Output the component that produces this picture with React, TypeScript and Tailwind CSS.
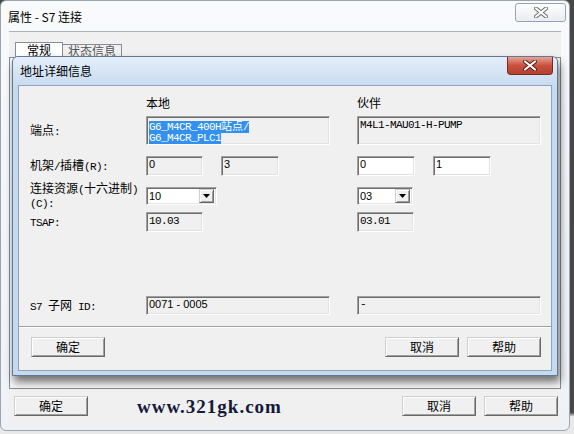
import React from "react";

// ASCII runs in a narrow mono face (SimSun-like), CJK stays 12px
function Mixed({ text }: { text: string }) {
  const parts = text.split(/([\x20-\x7e]+)/).filter((p) => p !== "");
  return (
    <>
      {parts.map((p, i) =>
        /^[\x20-\x7e]+$/.test(p) ? (
          <span key={i} className="font-['Liberation_Mono',monospace] text-[11px] tracking-[-0.6px] whitespace-pre">
            {p}
          </span>
        ) : (
          <span key={i}>{p}</span>
        )
      )}
    </>
  );
}

const sunken =
  "border border-[#a0a0a0] border-r-white border-b-white shadow-[inset_1px_1px_0_#6e6e6e,inset_-1px_-1px_0_#e3e3e3]";
const raised =
  "border border-[#cfcfcf] border-r-[#696969] border-b-[#696969] shadow-[inset_1px_1px_0_#ffffff,inset_-1px_-1px_0_#a0a0a0] bg-[#f0f0f0]";

function Btn({ label, className }: { label: string; className: string }) {
  return (
    <div className={`${raised} ${className} flex items-center justify-center text-[12px] leading-none text-black`}>
      {label}
    </div>
  );
}

function CloseX({ red }: { red?: boolean }) {
  return (
    <svg width="14" height="11" viewBox="0 0 14 11">
      <path d="M2 1.5 L12 9.5 M12 1.5 L2 9.5" stroke={red ? "#5a1a12" : "#6b6b6b"} strokeWidth="4" strokeLinecap="round" />
      <path d="M2 1.5 L12 9.5 M12 1.5 L2 9.5" stroke="#ffffff" strokeWidth="2.2" strokeLinecap="round" />
    </svg>
  );
}

function Combo({ value, className }: { value: string; className: string }) {
  return (
    <div className={`${sunken} ${className} flex h-[18px] items-center justify-between bg-white pl-[2px] pr-[2px]`}>
      <span className="font-['Liberation_Sans',sans-serif] text-[11px] leading-none">{value}</span>
      <div className={`${raised} flex h-[14px] w-[15px] items-center justify-center`}>
        <svg width="7" height="4" viewBox="0 0 7 4">
          <path d="M0 0 H7 L3.5 4 Z" fill="#000" />
        </svg>
      </div>
    </div>
  );
}

export default function App() {
  return (
    <div className="relative h-[434px] w-[574px] overflow-hidden bg-gradient-to-b from-[#474747] from-[95%] to-[#e9e9e9] to-[96%] font-['Noto_Sans_CJK_SC',sans-serif] text-[12px] text-black">
      {/* outer window: 属性 - S7 连接 */}
      <div className="flex h-[431px] w-[570px] flex-col rounded-[6px] border border-[#9aa5b1] bg-gradient-to-b from-[#f8fafc] to-[#eef2f6]">
        <div className="flex h-[30px] shrink-0 items-start justify-between pl-[7px] pr-[3px]">
          <span className="mt-[8px] text-[12px] leading-[16px]">属性 - S7 连接</span>
          <div className="mt-[2px] flex h-[19px] w-[51px] items-center justify-center rounded-[3px] border border-[#9aa3ad] bg-gradient-to-b from-[#fdfdfd] to-[#e9edf1]">
            <CloseX />
          </div>
        </div>

        <div className="mx-[8px] flex flex-1 flex-col border-t border-[#aab2bc] bg-[#f0f0f0]">
          <div className="mt-[10px] flex h-[15px] items-end pl-[6px]">
            <div className="flex h-[15px] w-[48px] items-center justify-center border border-b-0 border-[#898c95] bg-white text-[12px]">
              常规
            </div>
            <div className="flex h-[13px] w-[59px] items-center justify-center border border-b-0 border-l-0 border-[#898c95] text-[12px] text-[#555]">
              状态信息
            </div>
          </div>
          <div className="h-[332px] border border-[#898c95] bg-[#f7f7f7]" />
          <div className="mt-[7px] flex items-center pl-[5px] pr-[3px]">
            <Btn label="确定" className="h-[20px] w-[74px]" />
            <span className="ml-[49px] font-['Liberation_Serif',serif] text-[19px] font-bold leading-none tracking-[1px] text-[#15183a]">
              www.321gk.com
            </span>
            <div className="ml-auto flex gap-[8px]">
              <Btn label="取消" className="h-[20px] w-[74px]" />
              <Btn label="帮助" className="h-[20px] w-[74px]" />
            </div>
          </div>
        </div>
        <div className="h-[3px]" />
      </div>

      {/* modal: 地址详细信息 */}
      <div className="absolute left-[12px] top-[56px] flex h-[320px] w-[546px] flex-col rounded-t-[6px] border border-[#5f7893] bg-[#c6daef] shadow-[2px_6px_9px_rgba(0,0,0,0.55)]">
        <div className="relative flex h-[28px] shrink-0 items-center rounded-t-[5px] bg-gradient-to-b from-[#e4eef9] to-[#c9dcf0] pl-[7px]">
          <span className="text-[12px] leading-none">地址详细信息</span>
          <div className="absolute right-[4px] top-0 flex h-[18px] w-[46px] items-center justify-center rounded-b-[4px] border border-t-0 border-[#7c2a20] bg-gradient-to-b from-[#e7a395] via-[#c8503e] to-[#b6402f]">
            <CloseX red />
          </div>
        </div>

        <div className="mx-[5px] flex h-[286px] flex-col border border-[#8fa3ba] bg-[#f0f0f0]">
          {/* header */}
          <div className="mt-[9px] flex h-[16px] items-center">
            <div className="w-[127px]" />
            <div className="w-[184px] text-[12px] leading-none">本地</div>
            <div className="ml-[27px] w-[184px] text-[12px] leading-none">伙伴</div>
          </div>

          {/* endpoint */}
          <div className="mt-[5px] flex h-[29px] items-center">
            <div className="w-[127px] pl-[11px]">
              <Mixed text="端点:" />
            </div>
            <div className={`${sunken} h-[29px] w-[184px] pl-[2px] pt-[3px] font-['Liberation_Mono',monospace] text-[11px] leading-[11px] tracking-[-0.6px] text-white`}>
              <div>
                <span className="bg-[#3390f0]">
                  G6_M4CR_400H<span className="font-['Noto_Sans_CJK_SC',sans-serif] text-[11px] tracking-normal">站点</span>/
                </span>
              </div>
              <div>
                <span className="bg-[#3390f0]">G6_M4CR_PLC1</span>
              </div>
            </div>
            <div className={`${sunken} ml-[27px] h-[29px] w-[184px] pl-[2px] pt-[3px] font-['Liberation_Mono',monospace] text-[11px] leading-[11px] tracking-[-0.6px]`}>
              M4L1-MAU01-H-PUMP
            </div>
          </div>

          {/* rack / slot */}
          <div className="mt-[11px] flex h-[20px] items-center">
            <div className="w-[127px] pl-[11px]">
              <Mixed text="机架/插槽(R):" />
            </div>
            <div className="flex w-[184px] gap-[18px]">
              <div className={`${sunken} h-[20px] w-[57px] pl-[2px] font-['Liberation_Sans',sans-serif] text-[11px] leading-[15px]`}>0</div>
              <div className={`${sunken} h-[20px] w-[58px] pl-[2px] font-['Liberation_Sans',sans-serif] text-[11px] leading-[15px]`}>3</div>
            </div>
            <div className="ml-[27px] flex w-[184px] gap-[18px]">
              <div className={`${sunken} h-[20px] w-[58px] bg-white pl-[2px] font-['Liberation_Sans',sans-serif] text-[11px] leading-[15px]`}>0</div>
              <div className={`${sunken} h-[20px] w-[58px] bg-white pl-[2px] font-['Liberation_Sans',sans-serif] text-[11px] leading-[15px]`}>1</div>
            </div>
          </div>

          {/* connection resource */}
          <div className="mt-[11px] flex h-[18px] items-center">
            <div className="w-[127px] pl-[11px] leading-[12px]">
              <div>
                <Mixed text="连接资源(十六进制)" />
              </div>
              <div>
                <Mixed text="(C):" />
              </div>
            </div>
            <div className="w-[184px]">
              <Combo value="10" className="w-[71px]" />
            </div>
            <div className="ml-[27px] w-[184px]">
              <Combo value="03" className="w-[56px]" />
            </div>
          </div>

          {/* TSAP */}
          <div className="mt-[7px] flex h-[20px] items-center">
            <div className="w-[127px] pl-[11px]">
              <Mixed text="TSAP:" />
            </div>
            <div className="w-[184px]">
              <div className={`${sunken} h-[20px] w-[57px] pl-[2px] font-['Liberation_Mono',monospace] text-[11px] leading-[16px] tracking-[-0.6px]`}>10.03</div>
            </div>
            <div className="ml-[27px] w-[184px]">
              <div className={`${sunken} h-[20px] w-[57px] pl-[2px] font-['Liberation_Mono',monospace] text-[11px] leading-[16px] tracking-[-0.6px]`}>03.01</div>
            </div>
          </div>

          {/* S7 subnet ID */}
          <div className="mt-[64px] flex h-[19px] items-center">
            <div className="w-[127px] pl-[11px]">
              <Mixed text="S7 子网 ID:" />
            </div>
            <div className={`${sunken} h-[19px] w-[184px] pl-[2px] font-['Liberation_Sans',sans-serif] text-[11px] leading-[15px]`}>
              0071 - 0005
            </div>
            <div className={`${sunken} ml-[27px] h-[19px] w-[184px] pl-[2px] font-['Liberation_Mono',monospace] text-[11px] leading-[14px]`}>
              -
            </div>
          </div>

          <div className="mt-[11px] h-[2px] border-t border-b border-t-[#a0a0a0] border-b-white" />

          <div className="mt-[9px] flex items-center justify-between pl-[12px] pr-[10px]">
            <Btn label="确定" className="h-[20px] w-[74px]" />
            <div className="flex gap-[8px]">
              <Btn label="取消" className="h-[20px] w-[74px]" />
              <Btn label="帮助" className="h-[20px] w-[74px]" />
            </div>
          </div>
        </div>
      </div>
    </div>
  );
}
